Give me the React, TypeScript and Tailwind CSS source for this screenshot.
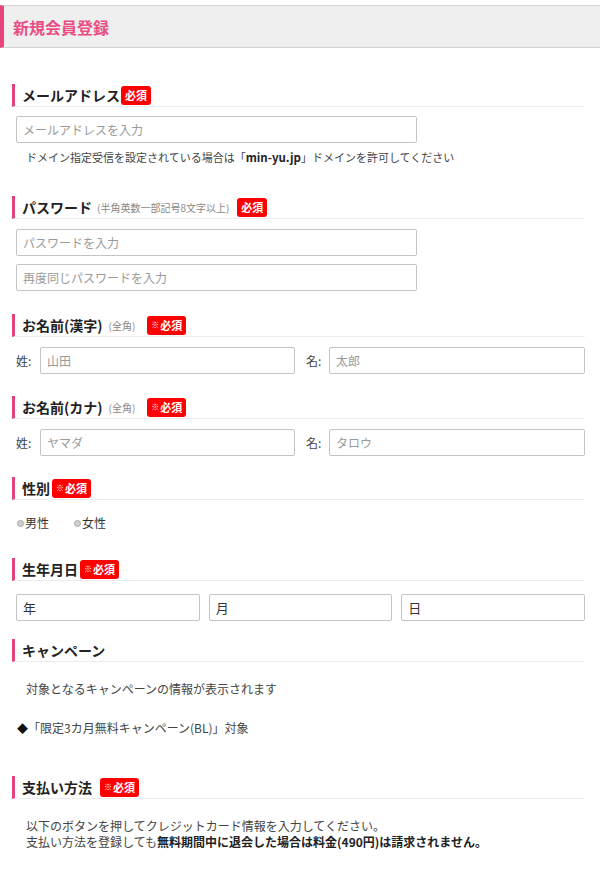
import React from "react";

const F = { fontFamily: '"Noto Sans CJK JP", "Noto Sans", sans-serif' };

function Badge({ mark = false, className = "" }: { mark?: boolean; className?: string }) {
  return (
    <span className={`inline-flex items-center h-[19px] px-[4px] rounded-[3px] bg-[#f00] text-white font-bold text-[11px] leading-none ${className}`}>
      {mark && <span className="text-[8px] mr-[1px] font-normal">※</span>}
      必須
    </span>
  );
}

function Heading({ children, className = "" }: { children: React.ReactNode; className?: string }) {
  return (
    <div className={`flex items-center h-[23px] ml-[12px] border-l-[3px] border-[#e0457f] border-b border-b-[#ececec] pl-[7px] ${className}`}>
      {children}
    </div>
  );
}

function Input({ placeholder, className = "", dark = false }: { placeholder: string; className?: string; dark?: boolean }) {
  return (
    <input
      readOnly
      placeholder={placeholder}
      className={`h-[27px] border border-[#c4c4c4] rounded-[2px] px-[6px] text-[12px] ${dark ? "placeholder:text-[#333] text-[13px]" : "placeholder:text-[#9a9a9a]"} outline-none bg-white ${className}`}
      style={F}
    />
  );
}

export default function App() {
  return (
    <div className="w-[600px] min-h-[872px] bg-white pt-[5px] text-[#333]" style={F}>
      <div className="h-[43px] bg-[#efefef] border-y border-[#d4d4d4] border-l-[4px] border-l-[#e8457f] flex items-center pl-[9px]">
        <span className="text-[#e94d84] font-bold text-[16px]">新規会員登録</span>
      </div>

      <div className="pr-[15px]">
        {/* Email */}
        <Heading className="mt-[36px]">
          <span className="font-bold text-[14px] text-[#222]">メールアドレス</span>
          <Badge className="ml-[1px]" />
        </Heading>
        <div className="pl-[16px] mt-[9px]">
          <Input placeholder="メールアドレスを入力" className="w-[401px]" />
        </div>
        <p className="pl-[26px] mt-[7px] text-[11px] leading-[14px] text-[#444]">
          ドメイン指定受信を設定されている場合は「<b className="text-[#222] text-[11.5px]">min-yu.jp</b>」ドメインを許可してください
        </p>

        {/* Password */}
        <Heading className="mt-[32px]">
          <span className="font-bold text-[14px] text-[#222]">パスワード</span>
          <span className="text-[10px] text-[#888] ml-[5px]">(半角英数一部記号8文字以上)</span>
          <Badge className="ml-[8px]" />
        </Heading>
        <div className="pl-[16px] mt-[10px] flex flex-col gap-[8px]">
          <Input placeholder="パスワードを入力" className="w-[401px]" />
          <Input placeholder="再度同じパスワードを入力" className="w-[401px]" />
        </div>

        {/* Name kanji */}
        <Heading className="mt-[23px]">
          <span className="font-bold text-[14px] text-[#222]">お名前(漢字)</span>
          <span className="text-[10px] text-[#888] ml-[6px]">(全角)</span>
          <Badge mark className="ml-[12px]" />
        </Heading>
        <div className="pl-[16px] mt-[10px] grid grid-cols-2 gap-[11px]">
          <div className="flex items-center">
            <span className="w-[24px] text-[12px] text-[#444]">姓:</span>
            <Input placeholder="山田" className="flex-1 min-w-0" />
          </div>
          <div className="flex items-center">
            <span className="w-[23px] text-[12px] text-[#444]">名:</span>
            <Input placeholder="太郎" className="flex-1 min-w-0" />
          </div>
        </div>

        {/* Name kana */}
        <Heading className="mt-[22px]">
          <span className="font-bold text-[14px] text-[#222]">お名前(カナ)</span>
          <span className="text-[10px] text-[#888] ml-[6px]">(全角)</span>
          <Badge mark className="ml-[12px]" />
        </Heading>
        <div className="pl-[16px] mt-[10px] grid grid-cols-2 gap-[11px]">
          <div className="flex items-center">
            <span className="w-[24px] text-[12px] text-[#444]">姓:</span>
            <Input placeholder="ヤマダ" className="flex-1 min-w-0" />
          </div>
          <div className="flex items-center">
            <span className="w-[23px] text-[12px] text-[#444]">名:</span>
            <Input placeholder="タロウ" className="flex-1 min-w-0" />
          </div>
        </div>

        {/* Gender */}
        <Heading className="mt-[21px]">
          <span className="font-bold text-[14px] text-[#222]">性別</span>
          <Badge mark className="ml-[2px]" />
        </Heading>
        <div className="pl-[17px] mt-[16px] flex items-center h-[14px] text-[12px] leading-[14px] text-[#333]">
          <span className="inline-block w-[7px] h-[7px] rounded-full bg-[#cfcfcf] border border-[#aaa]" />
          <span className="ml-[1px]">男性</span>
          <span className="inline-block w-[7px] h-[7px] rounded-full bg-[#cfcfcf] border border-[#aaa] ml-[25px]" />
          <span className="ml-[1px]">女性</span>
        </div>

        {/* Birthday */}
        <Heading className="mt-[28px]">
          <span className="font-bold text-[14px] text-[#222]">生年月日</span>
          <Badge mark className="ml-[2px]" />
        </Heading>
        <div className="pl-[16px] mt-[13px] grid grid-cols-3 gap-[9px]">
          <Input dark placeholder="年" className="w-full" />
          <Input dark placeholder="月" className="w-full" />
          <Input dark placeholder="日" className="w-full" />
        </div>

        {/* Campaign */}
        <Heading className="mt-[18px]">
          <span className="font-bold text-[14px] text-[#222]">キャンペーン</span>
        </Heading>
        <p className="pl-[26px] mt-[18px] text-[12px] leading-[18px] text-[#444]">
          対象となるキャンペーンの情報が表示されます
        </p>
        <p className="pl-[17px] mt-[21px] text-[12px] leading-[18px] text-[#444]">
          <span className="text-[#111] text-[11px]">◆</span>「限定3カ月無料キャンペーン(BL)」対象
        </p>

        {/* Payment */}
        <Heading className="mt-[39px]">
          <span className="font-bold text-[14px] text-[#222]">支払い方法</span>
          <Badge mark className="ml-[8px]" />
        </Heading>
        <div className="pl-[26px] mt-[19px] text-[12px] leading-[16px] text-[#444]">
          <p>以下のボタンを押してクレジットカード情報を入力してください。</p>
          <p>
            支払い方法を登録しても<b className="text-[#222]">無料期間中に退会した場合は料金(490円)は請求されません。</b>
          </p>
        </div>
      </div>
    </div>
  );
}
